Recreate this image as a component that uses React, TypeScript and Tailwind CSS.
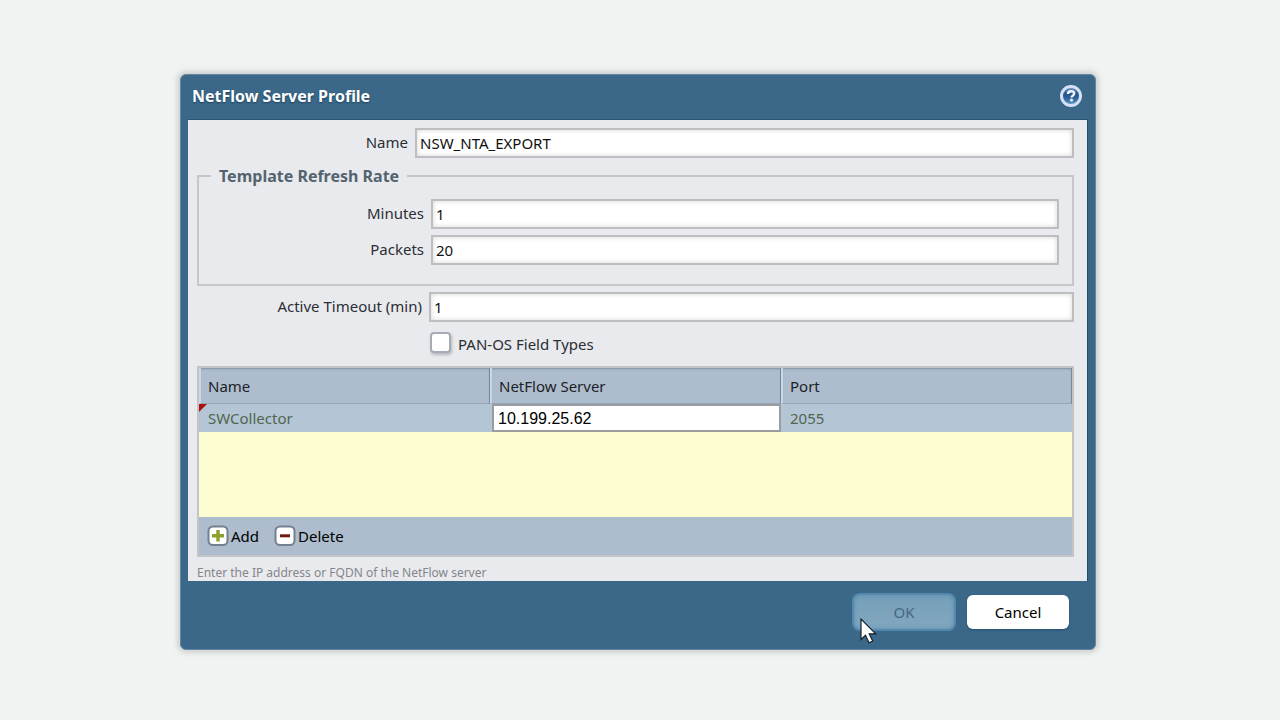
import { useState } from "react"
import type { ReactNode } from "react"

type FieldProps = {
  id: string
  label: string
  labelWidth: string
  value: string
  onChange: (value: string) => void
}

function Field({ id, label, labelWidth, value, onChange }: FieldProps) {
  return (
    <div className="flex items-center gap-[7px]">
      <label htmlFor={id} className={`${labelWidth} shrink-0 pb-0.5 text-right leading-5`}>
        {label}
      </label>
      <input
        id={id}
        type="text"
        value={value}
        onChange={(e) => onChange(e.target.value)}
        className="h-[30px] min-w-0 flex-1 border-2 border-[#bcbec0] bg-white px-[3px] text-[#111] shadow-[inset_0_0_5px_#d5d5d5] outline-none"
      />
    </div>
  )
}

function ToolButton({ label, children }: { label: string; children: ReactNode }) {
  return (
    <button type="button" className="flex items-center gap-0.5 text-black">
      <svg width="22" height="22" viewBox="0 0 22 22" aria-hidden="true">
        <rect x="1.500" y="1.500" width="19" height="18.500" rx="4.500" fill="#fff" stroke="#74808f" strokeWidth="2" />
        {children}
      </svg>
      {label}
    </button>
  )
}

function HelpIcon() {
  return (
    <svg width="24" height="24" viewBox="0 0 24 24" aria-hidden="true">
      <defs>
        <linearGradient id="help" x1="0" y1="0" x2="0" y2="1">
          <stop offset="0" stopColor="#7c9fc8" />
          <stop offset="0.4" stopColor="#245488" />
          <stop offset="0.6" stopColor="#2d6296" />
          <stop offset="1" stopColor="#69a4cc" />
        </linearGradient>
      </defs>
      <circle cx="12" cy="12" r="9.500" fill="url(#help)" stroke="#d3e2f7" strokeWidth="3" />
      <path
        d="M9 10c0-1.800 1.300-2.700 3.200-2.700 1.800 0 3 .8 3 2.300 0 2-2.600 2.100-2.600 3.900"
        fill="none"
        stroke="#eef5ff"
        strokeWidth="2.400"
      />
      <circle cx="12.500" cy="16" r="1.500" fill="#eef5ff" />
    </svg>
  )
}

const headCell =
  "h-9 border-l-2 border-l-[#cbd9e6] border-r border-r-[#76889b] border-b border-b-[#93a7bb] px-[7px] pt-px text-left font-normal shadow-[inset_0_2px_2px_-1px_#7f91a4]"

export default function App() {
  const [name, setName] = useState("NSW_NTA_EXPORT")
  const [minutes, setMinutes] = useState("1")
  const [packets, setPackets] = useState("20")
  const [timeout, setActiveTimeout] = useState("1")
  const [panOs, setPanOs] = useState(false)
  const [server, setServer] = useState("10.199.25.62")

  return (
    <main className="flex min-h-screen items-center justify-center bg-[#f0f3f2] pt-1 pr-1 font-['Noto_Sans',sans-serif] text-[15px] text-[#2b2e33]">
      <section
        role="dialog"
        aria-labelledby="title"
        className="w-full max-w-[916px] rounded-md border border-[#64869f] bg-[#3b6888] px-[7px] shadow-[0_0_5px_3px_#cfd2d1]"
      >
        <header className="flex h-11 items-center justify-between pr-[5px] pb-0.5 pl-1">
          <h1 id="title" className="text-base font-bold text-white [text-shadow:0_1px_2px_#1d425d]">
            NetFlow Server Profile
          </h1>
          <button type="button" aria-label="Help">
            <HelpIcon />
          </button>
        </header>

        <div className="border-t border-r border-t-[#255675] border-r-[#155373] bg-[#e9eaee] pt-2 pr-[13px] pl-[9px]">
          <Field id="name" label="Name" labelWidth="w-[211px]" value={name} onChange={setName} />

          <fieldset className="mt-1.5 border-2 border-[#c5c7ca] pr-[13px] pb-[19px] pl-3">
            <legend className="px-2 text-base leading-6 font-bold text-[#54646f]">Template Refresh Rate</legend>
            <div className="flex flex-col gap-1.5 pt-[11px]">
              <Field id="minutes" label="Minutes" labelWidth="w-[213px]" value={minutes} onChange={setMinutes} />
              <Field id="packets" label="Packets" labelWidth="w-[213px]" value={packets} onChange={setPackets} />
            </div>
          </fieldset>

          <div className="mt-1.5">
            <Field
              id="timeout"
              label="Active Timeout (min)"
              labelWidth="w-[225px]"
              value={timeout}
              onChange={setActiveTimeout}
            />
          </div>

          <div className="mt-2 flex items-center gap-[7px] pl-[233px]">
            <input
              id="pan-os"
              type="checkbox"
              checked={panOs}
              onChange={(e) => setPanOs(e.target.checked)}
              className="size-[21px] appearance-none rounded-sm border-2 border-[#a5acb6] bg-white shadow-[1px_2px_3px_#b5b7bb] checked:bg-[#3b6888]"
            />
            <label htmlFor="pan-os" className="pt-1 leading-5">
              PAN-OS Field Types
            </label>
          </div>

          <div className="mt-3 border-2 border-[#c2c4c5] bg-[#fefdd1]">
            <table className="w-full table-fixed border-separate border-spacing-0">
              <thead className="bg-[#adbdcd] text-[#1d2228]">
                <tr>
                  <th className={headCell}>Name</th>
                  <th className={headCell}>NetFlow Server</th>
                  <th className={headCell}>Port</th>
                </tr>
              </thead>
              <tbody className="bg-[#b4c5d5] text-[#51664f]">
                <tr>
                  <td className="relative h-7 px-[9px]">
                    {/* marks an unsaved value */}
                    <span className="absolute top-0 left-0 border-t-8 border-r-8 border-t-[#b00d12] border-r-transparent" />
                    SWCollector
                  </td>
                  <td className="h-7 p-0 pl-0.5">
                    <input
                      type="text"
                      aria-label="NetFlow Server"
                      value={server}
                      onChange={(e) => setServer(e.target.value)}
                      className="block h-7 w-full border-2 border-[#9a9c9f] bg-white px-1 pt-0.5 font-['Liberation_Sans',sans-serif] text-base text-black outline-none"
                    />
                  </td>
                  <td className="h-7 px-[9px]">2055</td>
                </tr>
              </tbody>
            </table>
            <div className="mt-[85px] flex h-[38px] items-center gap-[15px] bg-[#adbdcd] pl-2">
              <ToolButton label="Add">
                <path d="M11 5v11.500M5 10.800h12" stroke="#8ea02c" strokeWidth="3.400" />
              </ToolButton>
              <ToolButton label="Delete">
                <path d="M6 10.800h10" stroke="#6e1a10" strokeWidth="3" />
              </ToolButton>
            </div>
          </div>

          <p className="pt-[7px] text-[12px] leading-[17px] text-[#84868a]">
            Enter the IP address or FQDN of the NetFlow server
          </p>
        </div>

        <footer className="flex h-[68px] items-center justify-end gap-[11px] pr-[19px] pb-1.5">
          <div className="relative">
            <button
              type="button"
              disabled
              className="block h-[38px] w-[104px] rounded-lg border-2 border-[#5488ac] bg-linear-to-b from-[#769fba] to-[#82a8bf] text-[#466880] shadow-[inset_0_0_5px_#5b8eb1]"
            >
              OK
            </button>
            <svg width="18" height="27" viewBox="0 0 18 27" className="absolute top-[25px] left-2" aria-hidden="true">
              <path
                d="M1 1v20.500l4.500-4.300 3.500 7.500 3.700-1.700-3.500-7.200h6.500z"
                fill="#fff"
                stroke="#16212b"
                strokeWidth="1.200"
              />
            </svg>
          </div>
          <button
            type="button"
            className="h-[34px] w-[102px] rounded-md bg-white text-black shadow-[0_1px_2px_#24506e]"
          >
            Cancel
          </button>
        </footer>
      </section>
    </main>
  )
}
